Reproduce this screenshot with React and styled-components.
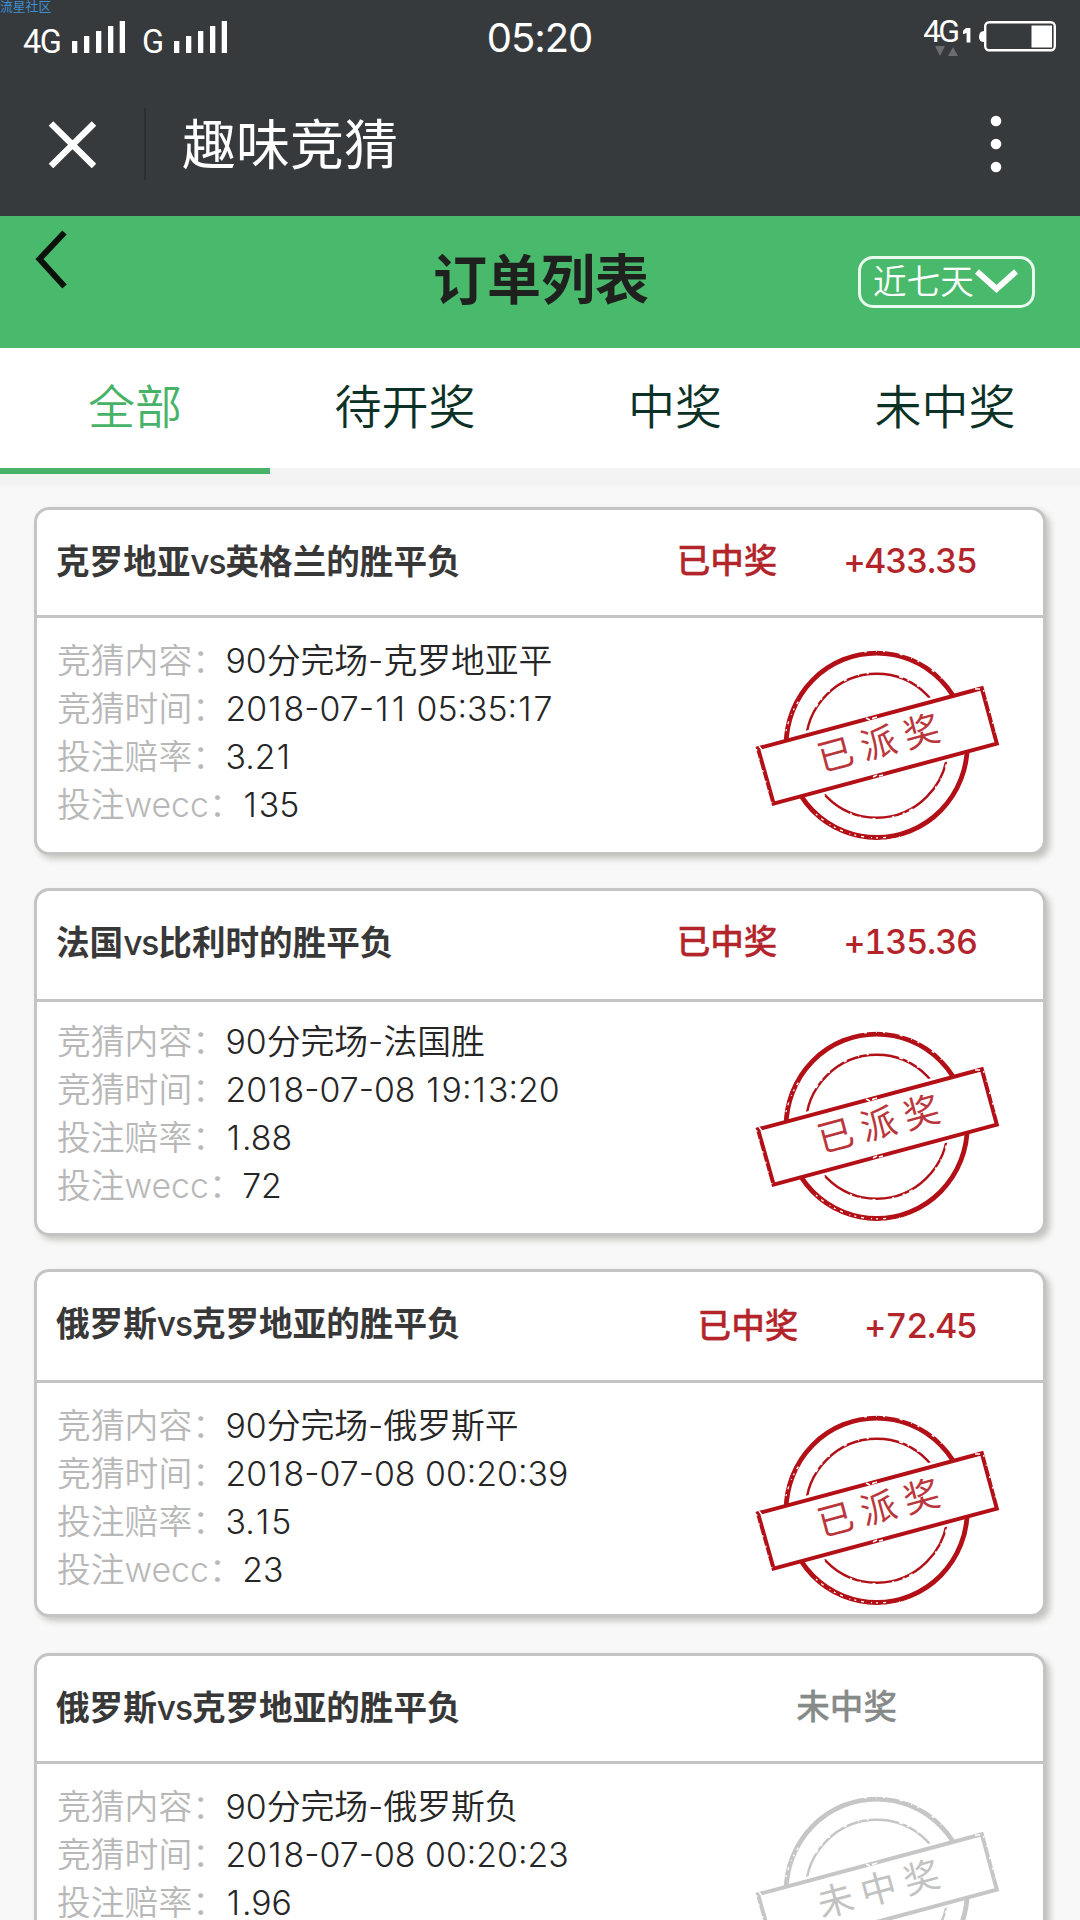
import React from "react";
import styled, { createGlobalStyle } from "styled-components";

const tabs = ["全部", "待开奖", "中奖", "未中奖"];

const orders = [
  {
    title: "克罗地亚vs英格兰的胜平负",
    status: "已中奖",
    amount: "+433.35",
    content: "90分完场-克罗地亚平",
    time: "2018-07-11 05:35:17",
    odds: "3.21",
    wecc: "135",
    stamp: "已派奖",
    won: true,
  },
  {
    title: "法国vs比利时的胜平负",
    status: "已中奖",
    amount: "+135.36",
    content: "90分完场-法国胜",
    time: "2018-07-08 19:13:20",
    odds: "1.88",
    wecc: "72",
    stamp: "已派奖",
    won: true,
    headHeight: 111,
    bodyTop: 9,
  },
  {
    title: "俄罗斯vs克罗地亚的胜平负",
    status: "已中奖",
    amount: "+72.45",
    content: "90分完场-俄罗斯平",
    time: "2018-07-08 00:20:39",
    odds: "3.15",
    wecc: "23",
    stamp: "已派奖",
    won: true,
    headHeight: 111,
    resultTop: 3,
    gap: 36,
  },
  {
    title: "俄罗斯vs克罗地亚的胜平负",
    status: "未中奖",
    content: "90分完场-俄罗斯负",
    time: "2018-07-08 00:20:23",
    odds: "1.96",
    wecc: "20",
    stamp: "未中奖",
    won: false,
  },
];

const Signal = () => (
  <svg width="53" height="32" viewBox="0 0 53 32" fill="#fff">
    <rect x="0" y="20" width="5.3" height="12" />
    <rect x="12" y="15" width="5.3" height="17" />
    <rect x="24" y="10" width="5.3" height="22" />
    <rect x="36" y="5" width="5.3" height="27" />
    <rect x="47.7" y="0" width="5.3" height="32" />
  </svg>
);

// the digit 1 is too narrow in Inter, give it some room
const Digits = ({ text }) =>
  text.split(/(1)/).map((part, i) => (part === "1" ? <One key={i}>1</One> : part));

const Stamp = ({ text, won }) => {
  const color = won ? "#b20f16" : "#c6c6c6";
  const band = "M18 118.3 L241.8 58.2 L256.8 113.6 L33.6 173.6 Z";
  return (
    <svg width="270" height="220" viewBox="0 0 270 220" fill="none">
      <ellipse cx="136.7" cy="115.8" rx="71" ry="72" stroke={color} strokeWidth="2.4" />
      <ellipse
        cx="136.7"
        cy="115.8"
        rx="72"
        ry="73"
        stroke="#fff"
        strokeWidth="1.6"
        strokeDasharray="2 17 3 12 1 8 2 31 4 5 2 9"
      />
      <path d={band} fill="#fff" stroke="#fff" strokeWidth="9" />
      <ellipse cx="136.7" cy="115.3" rx="90.6" ry="92.2" stroke={color} strokeWidth="4.8" />
      {/* worn ink */}
      <path
        d="M76 184 A90.4 92.2 0 0 0 152 206.5 M46 101 A90.4 92.2 0 0 1 60 69"
        stroke="#fff"
        strokeWidth="1.3"
        strokeDasharray="2 5 3 7 1 4"
      />
      <path
        d="M74 188 A92.5 94.2 0 0 0 160 207 M124 21.8 A92.5 94.2 0 0 1 204 51"
        stroke="#fff"
        strokeWidth="1.5"
        strokeDasharray="3 9 1 6 2 15"
      />
      <path d={band} fill="#fff" stroke={color} strokeWidth="4" />
      <path
        d="M16.5 119 L32 173 M243.5 60 L258 112"
        stroke="#fff"
        strokeWidth="1.2"
        strokeDasharray="2 8 1 11 2 9"
      />
      <path
        d="M126 88 l4 2 M132 88.5 l5 -1.5 M133 147 l4 -2 M139 146 l4 -1 M19 116 l3 4 M235 59 l5 0"
        stroke="#fff"
        strokeWidth="1.4"
      />
      <StampText
        x="143"
        y="126"
        textAnchor="middle"
        transform="rotate(-15 139 113.5)"
        $won={won}
      >
        {text}
      </StampText>
    </svg>
  );
};

const App = () => {
  return (
    <Page>
      <GlobalStyle />
      <Watermark>流星社区</Watermark>

      <StatusBar>
        <SignalGroup>
          <Network $width={49}>4G</Network>
          <Signal />
          <Network $width={32} $left={17}>G</Network>
          <Signal />
        </SignalGroup>
        <Clock>05:20</Clock>
        <BatteryGroup>
          <svg width="50" height="56" viewBox="0 -14 50 56">
            <NetworkLabel x="-1" y="26" textLength="37">4G</NetworkLabel>
            <path d="M42 12h4.4V26.5H42.6V17l-3.6 1.2v-3.4z" fill="#fff" />
            <path d="M11 30h10l-5 10z M24 40h10l-5 -9z" fill="#6b6d6f" />
          </svg>
          <svg width="78" height="32" viewBox="0 0 78 32">
            <path d="M5 10 Q0 10 0 16 Q0 21 5 21z" fill="#fff" />
            <rect x="6.2" y="1.2" width="69.6" height="28" rx="4" fill="none" stroke="#fff" strokeWidth="2.4" />
            <rect x="52.5" y="4.5" width="20.5" height="22" fill="#fff" />
          </svg>
        </BatteryGroup>
      </StatusBar>

      <NavBar>
        <svg width="48" height="48" viewBox="0 0 48 48" stroke="#fff" strokeWidth="6.4">
          <path d="M3 3.5 L46 46 M46 3.5 L3 46" />
        </svg>
        <NavDivider />
        <NavTitle>趣味竞猜</NavTitle>
        <svg width="12" height="58" viewBox="0 0 12 58" fill="#fff">
          <circle cx="6" cy="6" r="5.3" />
          <circle cx="6" cy="29" r="5.3" />
          <circle cx="6" cy="52" r="5.3" />
        </svg>
      </NavBar>

      <Header>
        <BackButton>
          <svg width="34" height="60" viewBox="0 0 34 60" fill="none" stroke="#0a120c" strokeWidth="6">
            <path d="M30.5 3.5 L5.5 30 L30.5 57.5" />
          </svg>
        </BackButton>
        <HeaderTitle>订单列表</HeaderTitle>
        <RangeCell>
          <RangeButton>
            近七天
            <svg width="46" height="28" viewBox="0 0 46 28" fill="none" stroke="#fff" strokeWidth="6">
              <path d="M3 3.5 L22.5 21 L42 3.5" />
            </svg>
          </RangeButton>
        </RangeCell>
      </Header>

      <TabBar>
        {tabs.map((tab, i) => (
          <Tab key={tab} $active={i === 0}>
            {tab}
          </Tab>
        ))}
      </TabBar>
      <Strip>
        <ActiveLine />
      </Strip>

      <OrderList>
        {orders.map((order) => {
          const [home, away] = order.title.split("vs");
          return (
            <Card key={order.time} $gap={order.gap}>
              <CardHead $height={order.headHeight}>
                <CardTitle>
                  {home}
                  <Versus>vs</Versus>
                  {away}
                </CardTitle>
                <Result $top={order.resultTop} $won={order.won}>
                  <span>{order.status}</span>
                  {order.amount && <Amount>{order.amount}</Amount>}
                </Result>
              </CardHead>
              <CardBody $top={order.bodyTop}>
                <Details>
                  <Row><Label>竞猜内容：</Label>{order.content}</Row>
                  <Row><Label>竞猜时间：</Label><Digits text={order.time} /></Row>
                  <Row><Label>投注赔率：</Label><Digits text={order.odds} /></Row>
                  <Row><Label>投注wecc：</Label><Digits text={order.wecc} /></Row>
                </Details>
                <Stamp text={order.stamp} won={order.won} />
              </CardBody>
            </Card>
          );
        })}
      </OrderList>
    </Page>
  );
};

export default App;

const GlobalStyle = createGlobalStyle`
  * {
    box-sizing: border-box;
  }
  body {
    margin: 0;
    font-family: Inter, "Noto Sans CJK SC", sans-serif;
  }
  svg {
    display: block;
    flex: none;
  }
`;

const Page = styled.div`
  position: relative;
  width: 1080px;
  height: 1920px;
  overflow: hidden;
  background: #f8f8f8;
`;

const Watermark = styled.div`
  position: absolute;
  top: 0;
  left: 0;
  font-size: 12.8px;
  line-height: 14px;
  color: #3c8fd2;
`;

const StatusBar = styled.div`
  display: grid;
  grid-template-columns: 1fr auto 1fr;
  height: 72px;
  padding: 0 24px 0 23px;
  background: #373a3c;
  color: #fff;
`;

const SignalGroup = styled.div`
  display: flex;
  align-items: flex-end;
  height: 53px;
`;

const Network = styled.span`
  width: ${(props) => props.$width}px;
  margin-left: ${(props) => props.$left || 0}px;
  font-family: Roboto, sans-serif;
  font-size: 32.5px;
  line-height: 22px;
  letter-spacing: -1.5px;
`;

const NetworkLabel = styled.text`
  font-family: Roboto, sans-serif;
  font-size: 32px;
  fill: #fff;
`;

const Clock = styled.div`
  padding-top: 18px;
  font-size: 40px;
  line-height: 40px;
  letter-spacing: -1px;
`;

const BatteryGroup = styled.div`
  display: flex;
  justify-content: flex-end;
  gap: 5px;
  padding-top: 2px;

  svg:last-child {
    margin: 19px -1px 0 0;
  }
`;

const NavBar = styled.div`
  display: flex;
  align-items: center;
  height: 144px;
  padding: 0 78px 0 48px;
  background: #373a3c;
`;

const NavDivider = styled.div`
  width: 2px;
  height: 72px;
  margin: 0 36px 0 48px;
  background: #2c2f31;
`;

const NavTitle = styled.div`
  flex: 1;
  padding-top: 4px;
  font-size: 54px;
  line-height: 60px;
  color: #fff;
`;

const Header = styled.div`
  display: grid;
  grid-template-columns: 1fr auto 1fr;
  height: 132px;
  background: #49ba6c;
`;

const BackButton = styled.div`
  padding: 13px 0 0 34px;
`;

const HeaderTitle = styled.h1`
  margin: 0;
  padding-left: 2px;
  font-size: 54px;
  font-weight: 700;
  line-height: 130px;
  color: #1f211f;
`;

const RangeCell = styled.div`
  display: flex;
  justify-content: flex-end;
  padding: 40px 45px 0 0;
`;

const RangeButton = styled.div`
  display: flex;
  align-items: center;
  width: 177px;
  height: 52px;
  padding-left: 12px;
  border: 3px solid #e9fbee;
  border-radius: 15px;
  font-size: 33.6px;
  font-weight: 350;
  line-height: 46px;
  color: #fff;
`;

const TabBar = styled.div`
  display: grid;
  grid-template-columns: repeat(4, 1fr);
  height: 120px;
  background: #fff;
`;

const Tab = styled.div`
  font-size: 47px;
  font-weight: 350;
  line-height: 118px;
  text-align: center;
  color: ${(props) => (props.$active ? "#48b368" : "#0c3228")};
`;

const Strip = styled.div`
  height: 18px;
  background: #f3f3f3;
`;

const ActiveLine = styled.div`
  width: 25%;
  height: 6px;
  background: #48b368;
`;

const OrderList = styled.div`
  padding: 21px 34px 0;
`;

const Card = styled.div`
  height: 348px;
  margin-bottom: ${(props) => props.$gap || 33}px;
  border: 3px solid #c4c4c4;
  border-radius: 15px;
  background: #fff;
  box-shadow: 4px 4px 6px #c4c4bf;
`;

const CardHead = styled.div`
  display: flex;
  height: ${(props) => props.$height || 108}px;
  padding: 26px 66px 0 19px;
  border-bottom: 3px solid #c4c4c4;
  font-size: 33.6px;
  line-height: 50px;
`;

const CardTitle = styled.div`
  flex: 1;
  padding-top: 1px;
  color: #383838;
  font-weight: 600;
`;

const Versus = styled.span`
  font-weight: 500;
  letter-spacing: -1.1px;
`;

const Result = styled.div`
  display: flex;
  gap: 66px;
  padding: ${(props) => props.$top || 0}px ${(props) => (props.$won ? 0 : 80)}px 0 0;
  font-weight: 500;
  color: ${(props) => (props.$won ? "#b3242b" : "#868a88")};
  -webkit-text-stroke: 0.3px;
`;

const Amount = styled.span`
  font-size: 34px;
  letter-spacing: -1.1px;
  font-variant-numeric: tabular-nums;
  -webkit-text-stroke: 0;
`;

const CardBody = styled.div`
  display: flex;
  justify-content: space-between;
  padding: ${(props) => props.$top || 12}px 33px 0 20px;
`;

const Details = styled.div`
  padding-top: 7px;
`;

const Row = styled.div`
  font-size: 33.8px;
  font-weight: 350;
  line-height: 48px;
  white-space: pre;
  color: #262626;
`;

const Label = styled.span`
  margin-right: -0.5px;
  color: #b8b8b8;
`;

const One = styled.span`
  padding: 0 2px 0 1.2px;
`;

const StampText = styled.text`
  font-size: 36px;
  font-weight: 400;
  letter-spacing: 8.5px;
  fill: ${(props) => (props.$won ? "#b9373c" : "#c2c2c2")};
`;
